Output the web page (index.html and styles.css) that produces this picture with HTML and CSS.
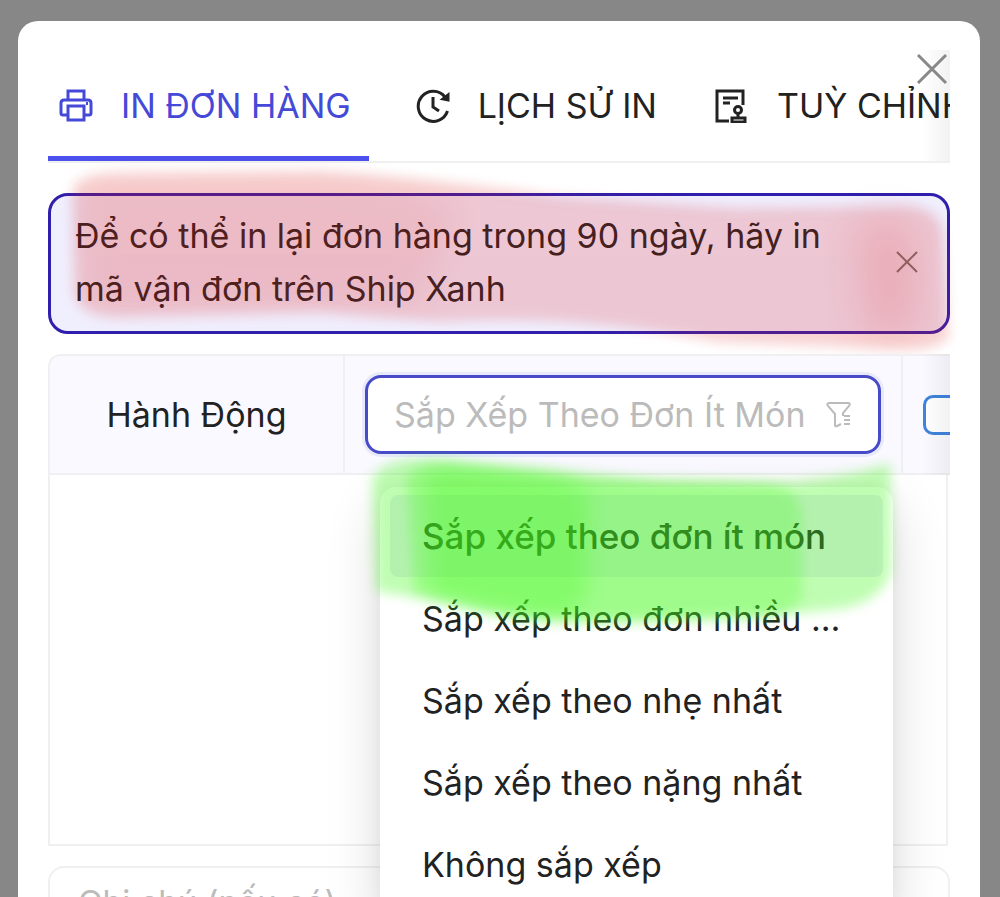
FILE: index.html
```html
<!DOCTYPE html>
<html lang="vi">
  <head>
    <meta charset="UTF-8" />
    <meta name="viewport" content="width=device-width, initial-scale=1.0" />
    <title>In đơn hàng</title>
    <link rel="stylesheet" href="styles.css">
  </head>
  <body>
    <div class="modal" role="dialog" aria-label="In đơn hàng">
      <button class="modal-close" type="button" aria-label="Đóng">
        <svg width="32" height="32" viewBox="0 0 32 32">
          <path d="M2 2 30 30M30 2 2 30" />
        </svg>
      </button>

      <nav class="tabs">
        <button class="tab active" type="button">
          <svg class="tab-icon" viewBox="0 0 34 34">
            <path d="M9 11V2h16v9M9 26H4q-2 0-2-2V14q0-3 3-3h24q3 0 3 3v10q0 2-2 2h-5M9 17h16v14H9z" />
            <path d="M27 14.500h2" />
          </svg>
          IN ĐƠN HÀNG
        </button>
        <button class="tab" type="button">
          <svg class="tab-icon" viewBox="0 0 34 34">
            <path d="M31.500 22A15 15 0 1 1 29 8M17 8v10l6 4" />
            <path class="solid" d="M32 6v5l-5-1z" />
          </svg>
          LỊCH SỬ IN
        </button>
        <button class="tab" type="button">
          <svg class="tab-icon" viewBox="0 0 34 34">
            <path d="M14 32H2V2h26v14M8 9h15M8 14h7" />
            <circle cx="23" cy="21" r="3.500" />
            <path d="M23 25v4M17 29h13v4H17z" />
          </svg>
          TUỲ CHỈNH
        </button>
      </nav>

      <div class="alert" role="alert">
        <p>Để có thể in lại đơn hàng trong 90 ngày, hãy in mã vận đơn trên Ship Xanh</p>
        <button class="alert-close" type="button" aria-label="Đóng thông báo">
          <svg width="24" height="24" viewBox="0 0 24 24">
            <path d="M2 2 22 22M22 2 2 22" />
          </svg>
        </button>
        <svg class="marker marker-red" viewBox="0 0 942 200" preserveAspectRatio="none">
          <path class="base" d="M54 25Q60 10 100 10L300 8Q420 14 540 32L720 44 890 42Q925 44 928 70L934 174Q920 188 870 185L700 178Q560 150 420 158L300 148 100 153Q60 152 56 130z" />
          <path class="left" d="M64 25Q70 14 100 14L300 14Q400 22 440 50L400 140Q360 146 300 144L100 146Q70 146 64 130z" />
          <path class="right" d="M840 60Q860 52 890 54 910 70 900 170L850 172z" />
        </svg>
      </div>

      <section class="orders">
        <div class="table-wrap">
          <table>
            <thead>
              <tr>
                <th class="col-action">Hành Động</th>
                <th class="col-sort">
                  <label class="sort-box">
                    <input type="text" role="combobox" aria-expanded="true" aria-label="Sắp xếp" placeholder="Sắp Xếp Theo Đơn Ít Món" />
                    <svg width="26" height="28" viewBox="0 0 26 28">
                      <path d="M4 2h18q3 0 1 3l-6 7v3M4 2Q0 2 2 5l7 8v11q0 2 2 1l4-2M18 15h6M18 19h6M18 23h6" />
                    </svg>
                  </label>
                </th>
                <th class="col-check"><input type="checkbox" aria-label="Chọn tất cả" /></th>
              </tr>
            </thead>
          </table>
        </div>
        <div class="table-body"></div>

        <div class="menu">
          <ul>
            <li><button class="selected" type="button">Sắp xếp theo đơn ít món</button></li>
            <li><button type="button">Sắp xếp theo đơn nhiều món</button></li>
            <li><button type="button">Sắp xếp theo nhẹ nhất</button></li>
            <li><button type="button">Sắp xếp theo nặng nhất</button></li>
            <li><button type="button">Không sắp xếp</button></li>
          </ul>
          <svg class="marker marker-green" viewBox="0 0 550 180" preserveAspectRatio="none">
            <path class="base" d="M12 30Q24 8 70 10L180 20 300 32 420 34Q490 28 530 14L531 120Q525 152 480 160L400 168 260 172Q160 172 100 156L16 142z" />
            <path class="mid" d="M46 30Q56 12 90 14L230 30 410 34Q442 40 442 70V150Q430 166 400 168L260 174Q160 174 100 156L54 144z" />
            <path class="left" d="M64 30Q76 16 100 20L190 28Q225 34 230 50L228 140Q220 170 180 168L110 154 70 144z" />
          </svg>
        </div>
      </section>

      <textarea class="note" aria-label="Ghi chú" placeholder="Ghi chú (nếu có)"></textarea>
    </div>
  </body>
</html>
```
FILE: styles.css
```css
* {
  box-sizing: border-box;
}
body {
  margin: 0;
  padding: 21px 20px 0 18px;
  height: 100vh;
  overflow: hidden;
  background-color: #878787;
  color: #222;
  font-family: Inter, "Noto Sans", sans-serif;
  font-size: 34px;
}
button,
input,
textarea {
  font: inherit;
  color: inherit;
}
button {
  padding: 0;
  border: 0;
  background: none;
  cursor: pointer;
}
svg {
  display: block;
  fill: none;
  stroke: currentColor;
  stroke-width: 3;
}
.modal {
  position: relative;
  height: 100%;
  overflow: hidden;
  padding: 29px 30px 0;
  border-radius: 20px 20px 0 0;
  background-color: #fff;
}
.modal-close {
  position: absolute;
  top: 32px;
  right: 32px;
  z-index: 2;
  color: #888;
}

/* tabs */
.tabs {
  position: relative;
  display: flex;
  gap: 36px;
  height: 113px;
  overflow: hidden;
  border-bottom: 2px solid #f0f0f0;
}
.tabs::after {
  content: "";
  position: absolute;
  top: 0;
  right: 0;
  bottom: 0;
  width: 28px;
  background: linear-gradient(to right, transparent, rgba(0, 0, 0, 0.05));
}
.tab {
  display: flex;
  flex: none;
  align-items: center;
  gap: 28px;
  padding: 0 11px;
  white-space: nowrap;
}
.tab.active {
  color: #4549d8;
  border-bottom: 5px solid #4c50ec;
  padding: 5px 18px 0 11px;
}
.tab-icon {
  width: 34px;
  height: 34px;
}
.tab-icon .solid {
  fill: currentColor;
}

/* notice */
.alert {
  position: relative;
  display: flex;
  align-items: center;
  margin-top: 30px;
  padding: 13px 28px 16px 24px;
  border: 3px solid #2f1fac;
  border-radius: 20px;
  background-color: #f0effe;
}
.alert p {
  flex: 1;
  margin: 0;
  padding-right: 60px;
  line-height: 53px;
}
.alert-close {
  color: #777;
}
.alert-close svg {
  stroke-width: 2;
}

/* highlighter strokes */
.marker {
  position: absolute;
  stroke: none;
  overflow: visible;
  pointer-events: none;
}
.marker path {
  filter: blur(6px);
}
.marker-red {
  top: -32px;
  left: -32px;
  width: calc(100% + 42px);
  height: 200px;
  fill: #dc1e1e;
}
.marker-red .base {
  opacity: 0.19;
}
.marker-red .left {
  opacity: 0.07;
  filter: blur(16px);
}
.marker-red .right {
  opacity: 0.14;
  filter: blur(20px);
}
.marker-green {
  top: -38px;
  left: -20px;
  width: calc(100% + 37px);
  height: 180px;
  fill: #41fa19;
}
.marker-green .base {
  opacity: 0.33;
}
.marker-green .mid {
  opacity: 0.25;
}
.marker-green .left {
  opacity: 0.28;
  filter: blur(10px);
}

/* orders table */
.orders {
  position: relative;
  margin-top: 20px;
}
.table-wrap {
  position: relative;
  overflow: hidden;
  border-radius: 12px 0 0 0;
}
.table-wrap::after {
  content: "";
  position: absolute;
  top: 0;
  right: 0;
  bottom: 0;
  width: 28px;
  background: linear-gradient(to right, transparent, rgba(0, 0, 0, 0.05));
}
table {
  width: 1100px;
  table-layout: fixed;
  border-collapse: separate;
  border-spacing: 0;
  border: 2px solid #f0f0f3;
  border-right: 0;
  border-radius: 12px 0 0 0;
  background-color: #faf9ff;
}
th {
  height: 117px;
  padding: 0 20px;
  border-right: 2px solid #f0f0f3;
  font-weight: 400;
}
.col-action {
  width: 295px;
}
.col-sort {
  width: 558px;
}
.col-check {
  text-align: left;
}
.col-check input {
  display: block;
  appearance: none;
  width: 40px;
  height: 40px;
  margin: 0;
  border: 3px solid #3f83dc;
  border-radius: 10px;
  background-color: #fff;
}
.sort-box {
  display: flex;
  align-items: center;
  height: 79px;
  padding: 0 26px;
  border: 3px solid #474bc8;
  border-radius: 16px;
  background-color: #fff;
  box-shadow: 0 0 0 3px #e8eafc;
  color: #bbb;
}
.sort-box input {
  flex: 1;
  min-width: 0;
  padding: 0;
  border: 0;
  outline: 0;
  background: none;
}
.sort-box svg {
  stroke-width: 2;
}
.sort-box input::placeholder,
.note::placeholder {
  color: #bbb;
  opacity: 1;
}
.table-body {
  height: 371px;
  margin-right: 2px;
  border: 2px solid #f0f0f0;
  border-top: 0;
}

/* sort menu */
.menu {
  position: absolute;
  top: 133px;
  left: 332px;
  right: 57px;
  z-index: 1;
  border-radius: 16px;
  background-color: #fff;
  box-shadow: 0 18px 56px rgba(0, 0, 0, 0.14), 0 0 20px rgba(0, 0, 0, 0.06);
}
.menu ul {
  margin: 0;
  padding: 8px 10px;
  list-style: none;
}
.menu button {
  display: block;
  width: 100%;
  height: 82px;
  padding: 0 32px;
  overflow: hidden;
  border-radius: 8px;
  text-align: left;
  text-overflow: ellipsis;
  white-space: nowrap;
}
.menu .selected {
  background-color: #eeeefb;
  font-size: 35px;
  font-weight: 500;
}

.note {
  display: block;
  width: 100%;
  height: 160px;
  margin-top: 20px;
  padding: 14px 28px;
  border: 2px solid #f0f0f0;
  border-radius: 16px;
  font-size: 33px;
  resize: none;
}
```
